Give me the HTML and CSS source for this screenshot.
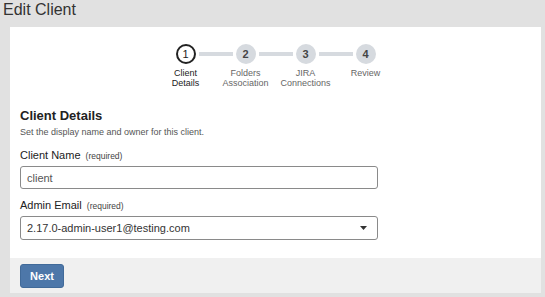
FILE: index.html
```html
<!DOCTYPE html>
<html>
<head>
    <meta charset="UTF-8">
    <title>Edit Client</title>
    <link rel="stylesheet" href="styles.css">
</head>
<body>
    <h1 class="page-title">Edit Client</h1>
    <div class="card">
        <div class="stepper">
            <div class="step-track">
                <span class="step-circle active">1</span>
                <span class="step-line"></span>
                <span class="step-circle">2</span>
                <span class="step-line"></span>
                <span class="step-circle">3</span>
                <span class="step-line"></span>
                <span class="step-circle">4</span>
            </div>
            <div class="step-labels">
                <span class="step-label active">Client<br>Details</span>
                <span class="step-label">Folders<br>Association</span>
                <span class="step-label">JIRA<br>Connections</span>
                <span class="step-label">Review</span>
            </div>
        </div>

        <div class="form-body">
            <h2 class="section-title">Client Details</h2>
            <p class="section-sub">Set the display name and owner for this client.</p>

            <label class="field-label">Client Name <small>(required)</small></label>
            <div class="text-input">client</div>

            <label class="field-label label-email">Admin Email <small>(required)</small></label>
            <div class="select-input">
                <span>2.17.0-admin-user1@testing.com</span>
                <svg width="7" height="4" viewBox="0 0 7 4"><path d="M0 0H7L3.5 4Z" fill="#333"/></svg>
            </div>
        </div>

        <div class="card-footer">
            <button class="btn-next">Next</button>
        </div>
    </div>
</body>
</html>
```

FILE: styles.css
```css
body{
    margin: 0;
    background: #e1e1e1;
    font-family: "Liberation Sans", Arial, sans-serif;
    color: #333;
}
.page-title{
    margin: 0;
    height: 26px;
    padding: 1px 3px 0;
    font-size: 16px;
    line-height: 18px;
    font-weight: normal;
    color: #333;
}
.card{
    margin: 0 4px 0 10px;
    background: #fff;
}

/* stepper */
.stepper{
    padding-top: 17px;
    display: flex;
    flex-direction: column;
    align-items: center;
}
.step-track{
    display: flex;
    align-items: center;
}
.step-circle{
    width: 20px;
    height: 20px;
    box-sizing: border-box;
    border-radius: 50%;
    background: #d6dadf;
    color: #444;
    font-size: 11px;
    font-weight: bold;
    display: flex;
    align-items: center;
    justify-content: center;
}
.step-circle.active{
    background: #fff;
    border: 2px solid #222;
    color: #222;
    font-weight: normal;
}
.step-line{
    width: 34px;
    height: 4px;
    margin: 0 3px;
    background: #d6dadf;
}
.step-labels{
    margin-top: 4px;
    display: grid;
    grid-template-columns: repeat(4, 60px);
}
.step-label{
    text-align: center;
    font-size: 9px;
    line-height: 10px;
    color: #666;
}
.step-label.active{
    color: #222;
}

/* form */
.form-body{
    padding: 20px 10px 18px;
}
.section-title{
    margin: 0;
    font-size: 13px;
    line-height: 16px;
    color: #222;
}
.section-sub{
    margin: 2px 0 0;
    font-size: 9px;
    line-height: 12px;
    color: #555;
}
.field-label{
    display: block;
    margin-top: 10px;
    font-size: 11px;
    line-height: 14px;
    color: #222;
}
.field-label small{
    font-size: 8.5px;
    color: #444;
    margin-left: 2px;
}
.label-email{
    margin-top: 9px;
}
.text-input, .select-input{
    margin-top: 3px;
    width: 358px;
    box-sizing: border-box;
    border: 1px solid #8a8a8a;
    border-radius: 3px;
    padding: 0 10px 0 6px;
    font-size: 11px;
    display: flex;
    align-items: center;
}
.text-input{
    height: 23px;
    color: #555;
}
.select-input{
    height: 24px;
    color: #333;
    justify-content: space-between;
}

/* footer */
.card-footer{
    background: #f0f0f0;
    padding: 6px 10px 5px;
}
.btn-next{
    width: 44px;
    height: 24px;
    border: 1px solid #416a99;
    border-radius: 3px;
    background: #4d77a9;
    color: #fff;
    font: bold 11px "Liberation Sans", Arial, sans-serif;
    padding: 0;
    display: block;
}
```
